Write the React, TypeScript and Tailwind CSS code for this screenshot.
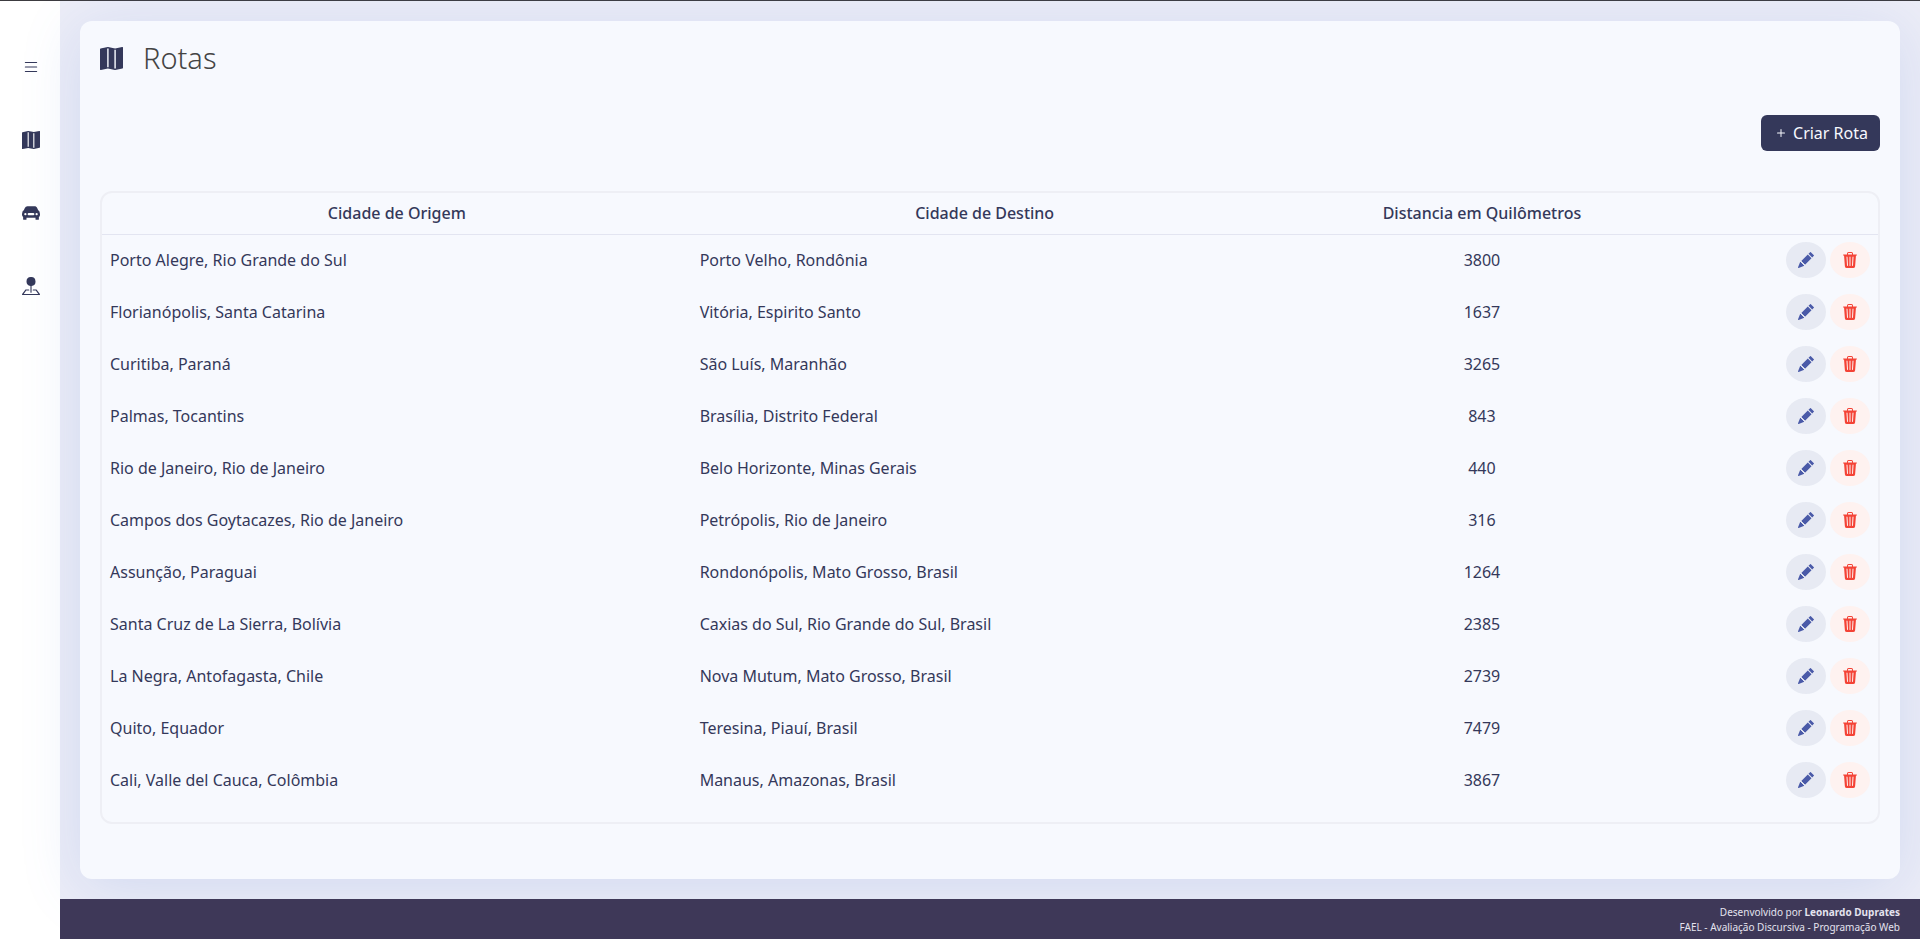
import React from "react";
import {
  BsList,
  BsMapFill,
  BsPencilFill,
  BsPinMapFill,
  BsPlus,
  BsTrash3Fill,
} from "react-icons/bs";

interface Route {
  origin: string;
  destination: string;
  distance: number;
}

const routes: Route[] = [
  { origin: "Porto Alegre, Rio Grande do Sul", destination: "Porto Velho, Rondônia", distance: 3800 },
  { origin: "Florianópolis, Santa Catarina", destination: "Vitória, Espirito Santo", distance: 1637 },
  { origin: "Curitiba, Paraná", destination: "São Luís, Maranhão", distance: 3265 },
  { origin: "Palmas, Tocantins", destination: "Brasília, Distrito Federal", distance: 843 },
  { origin: "Rio de Janeiro, Rio de Janeiro", destination: "Belo Horizonte, Minas Gerais", distance: 440 },
  { origin: "Campos dos Goytacazes, Rio de Janeiro", destination: "Petrópolis, Rio de Janeiro", distance: 316 },
  { origin: "Assunção, Paraguai", destination: "Rondonópolis, Mato Grosso, Brasil", distance: 1264 },
  { origin: "Santa Cruz de La Sierra, Bolívia", destination: "Caxias do Sul, Rio Grande do Sul, Brasil", distance: 2385 },
  { origin: "La Negra, Antofagasta, Chile", destination: "Nova Mutum, Mato Grosso, Brasil", distance: 2739 },
  { origin: "Quito, Equador", destination: "Teresina, Piauí, Brasil", distance: 7479 },
  { origin: "Cali, Valle del Cauca, Colômbia", destination: "Manaus, Amazonas, Brasil", distance: 3867 },
];

function CarIcon() {
  return (
    <svg viewBox="0 0 16 16" className="size-[18px]" fill="currentColor" aria-hidden="true">
      <path
        fillRule="evenodd"
        d="M2.52 3.515A2.5 2.5 0 0 1 4.82 2h6.362c1 0 1.904.596 2.298 1.515l.792 1.848c.075.175.21.319.38.404.5.25.855.715.965 1.262l.335 1.679c.033.161.049.325.049.49v.413c0 .814-.39 1.543-1 1.997V13.5a.5.5 0 0 1-.5.5h-2a.5.5 0 0 1-.5-.5v-1.338c-1.292.048-2.745.088-4 .088s-2.708-.04-4-.088V13.5a.5.5 0 0 1-.5.5h-2a.5.5 0 0 1-.5-.5v-1.892c-.61-.454-1-1.183-1-1.997v-.413a2.5 2.5 0 0 1 .049-.49l.335-1.68c.11-.546.465-1.012.964-1.261a.807.807 0 0 0 .381-.404l.792-1.848ZM3 10a1 1 0 1 0 0-2 1 1 0 0 0 0 2Zm10 0a1 1 0 1 0 0-2 1 1 0 0 0 0 2ZM6 8a1 1 0 0 0 0 2h4a1 1 0 1 0 0-2H6Z"
      />
    </svg>
  );
}

function Sidebar() {
  return (
    <nav className="flex w-[60px] shrink-0 flex-col items-center gap-[55px] bg-white pt-[57px] pl-0.5 text-lg text-[#34385a]">
      <button type="button" aria-label="Menu"><BsList /></button>
      <a href="#rotas" aria-label="Rotas"><BsMapFill /></a>
      <a href="#veiculos" aria-label="Veículos"><CarIcon /></a>
      <a href="#locais" aria-label="Locais"><BsPinMapFill /></a>
    </nav>
  );
}

function RoutesTable() {
  return (
    <div className="mt-10 rounded-xl border-2 border-[#eeeff5] pb-4">
      <table className="w-full table-fixed border-collapse">
        <thead>
          <tr className="h-[41px] border-b border-[#e3e5f1]">
            <th scope="col" className="w-[33.2%] px-2 font-medium">Cidade de Origem</th>
            <th scope="col" className="w-[33%] px-2 font-medium">Cidade de Destino</th>
            <th scope="col" className="w-[23%] px-2 font-medium">Distancia em Quilômetros</th>
            <td></td>
          </tr>
        </thead>
        <tbody>
          {routes.map((route) => (
            <tr key={route.origin} className="h-[52px]">
              <td className="px-2">{route.origin}</td>
              <td className="px-2">{route.destination}</td>
              <td className="px-2 text-center">{route.distance}</td>
              <td className="px-2">
                <div className="flex justify-end gap-1">
                  <button
                    type="button"
                    aria-label="Editar"
                    className="flex h-9 w-10 items-center justify-center rounded-[50%] bg-[#e7eaf3] text-[#4a5aa8]"
                  >
                    <BsPencilFill />
                  </button>
                  <button
                    type="button"
                    aria-label="Excluir"
                    className="flex h-9 w-10 items-center justify-center rounded-[50%] bg-[#fef2f0] text-[#f44336]"
                  >
                    <BsTrash3Fill />
                  </button>
                </div>
              </td>
            </tr>
          ))}
        </tbody>
      </table>
    </div>
  );
}

export default function App() {
  return (
    <div className="flex min-h-screen border-t border-[#3c3b40] bg-[#ecedf7] font-['Noto_Sans',sans-serif] text-base text-[#34385a]">
      <Sidebar />
      <div className="flex min-w-0 flex-1 flex-col">
        <main className="flex flex-1 flex-col p-5">
          <section className="relative flex-1 rounded-xl bg-[#f7f9fe] p-5 shadow-[0_8px_60px_rgba(86,127,217,0.18)]">
            <h1 className="flex h-[34px] items-center gap-5 text-[29px] font-light text-[#444444]">
              <BsMapFill className="size-[23px] text-[#34385a]" />
              Rotas
            </h1>
            <div className="mt-10 flex justify-end">
              <button
                type="button"
                className="flex h-9 items-center gap-1 rounded-md bg-[#34385a] px-3 text-[#f7f9fe]"
              >
                <BsPlus />
                Criar Rota
              </button>
            </div>
            <RoutesTable />
          </section>
        </main>
        <footer className="relative flex h-10 flex-col items-end justify-end bg-[#3e3858] px-5 pb-1 text-[10px] leading-[15px] text-[#e4e3ee]">
          <p>
            Desenvolvido por <strong className="font-bold">Leonardo Duprates</strong>
          </p>
          <p>FAEL - Avaliação Discursiva - Programação Web</p>
        </footer>
      </div>
    </div>
  );
}
